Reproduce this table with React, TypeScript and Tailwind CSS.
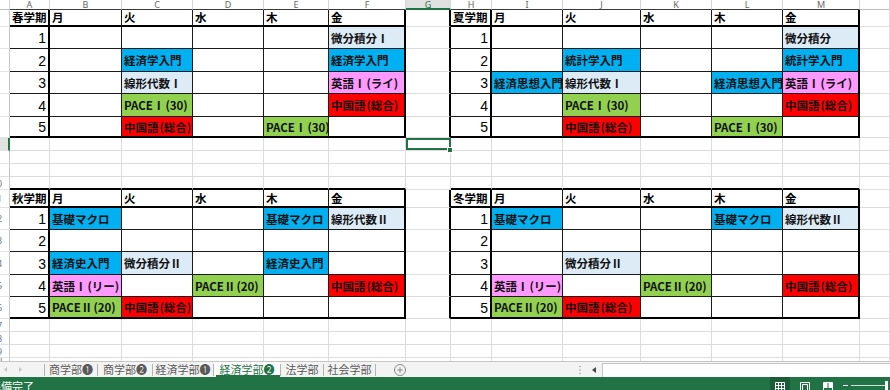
import React from 'react';

type Fill = 'B' | 'L' | 'G' | 'R' | 'P';
const FILL: Record<Fill, string> = {
  B: 'bg-[#00b0f0]',
  L: 'bg-[#ddebf7]',
  G: 'bg-[#92d050]',
  R: 'bg-[#ff0000]',
  P: 'bg-[#ff99ff]',
};

type Entry = [number, number, string, Fill];
interface Table {
  r0: number;
  c0: number;
  name: string;
  entries: Entry[];
}

const TABLES: Table[] = [
  {
    r0: 1,
    c0: 1,
    name: '春学期',
    entries: [
      [1, 5, '微分積分Ⅰ', 'L'],
      [2, 2, '経済学入門', 'B'],
      [2, 5, '経済学入門', 'B'],
      [3, 2, '線形代数Ⅰ', 'L'],
      [3, 5, '英語Ⅰ(ライ)', 'P'],
      [4, 2, 'PACEⅠ(30)', 'G'],
      [4, 5, '中国語(総合)', 'R'],
      [5, 2, '中国語(総合)', 'R'],
      [5, 4, 'PACEⅠ(30)', 'G'],
    ],
  },
  {
    r0: 1,
    c0: 8,
    name: '夏学期',
    entries: [
      [1, 5, '微分積分', 'L'],
      [2, 2, '統計学入門', 'B'],
      [2, 5, '統計学入門', 'B'],
      [3, 1, '経済思想入門', 'B'],
      [3, 2, '線形代数Ⅰ', 'L'],
      [3, 4, '経済思想入門', 'B'],
      [3, 5, '英語Ⅰ(ライ)', 'P'],
      [4, 2, 'PACEⅠ(30)', 'G'],
      [4, 5, '中国語(総合)', 'R'],
      [5, 2, '中国語(総合)', 'R'],
      [5, 4, 'PACEⅠ(30)', 'G'],
    ],
  },
  {
    r0: 11,
    c0: 1,
    name: '秋学期',
    entries: [
      [1, 1, '基礎マクロ', 'B'],
      [1, 4, '基礎マクロ', 'B'],
      [1, 5, '線形代数Ⅱ', 'L'],
      [3, 1, '経済史入門', 'B'],
      [3, 2, '微分積分Ⅱ', 'L'],
      [3, 4, '経済史入門', 'B'],
      [4, 1, '英語Ⅰ(リー)', 'P'],
      [4, 3, 'PACEⅡ(20)', 'G'],
      [4, 5, '中国語(総合)', 'R'],
      [5, 1, 'PACEⅡ(20)', 'G'],
      [5, 2, '中国語(総合)', 'R'],
    ],
  },
  {
    r0: 11,
    c0: 8,
    name: '冬学期',
    entries: [
      [1, 1, '基礎マクロ', 'B'],
      [1, 4, '基礎マクロ', 'B'],
      [1, 5, '線形代数Ⅱ', 'L'],
      [3, 2, '微分積分Ⅱ', 'L'],
      [4, 1, '英語Ⅰ(リー)', 'P'],
      [4, 3, 'PACEⅡ(20)', 'G'],
      [4, 5, '中国語(総合)', 'R'],
      [5, 1, 'PACEⅡ(20)', 'G'],
      [5, 2, '中国語(総合)', 'R'],
    ],
  },
];

const DAYS = ['月', '火', '水', '木', '金'];
const LETTERS = ['', 'A', 'B', 'C', 'D', 'E', 'F', 'G', 'H', 'I', 'J', 'K', 'L', 'M', ''];
const NROWS = 21;
const NCOLS = 15;

function tableAt(r: number, c: number): Table | undefined {
  return TABLES.find((t) => r >= t.r0 && r <= t.r0 + 5 && c >= t.c0 && c <= t.c0 + 5);
}

function rightClass(r: number, c: number): string {
  if (r === 0 || c === 0) return 'border-r border-r-[#d4d4d4]';
  const t = tableAt(r, c);
  if (t) {
    if (c === t.c0 || c === t.c0 + 5) return 'border-r-2 border-r-black';
    return 'border-r border-r-[#1a1a1a]';
  }
  const tn = tableAt(r, c + 1);
  if (tn && c + 1 === tn.c0) return 'border-r-2 border-r-black';
  return 'border-r border-r-[#dcdcdc]';
}

function bottomClass(r: number, c: number): string {
  if (r === NROWS - 1) return '';
  if (r === 0 && c === 7) return 'border-b-2 border-b-[#217346]';
  const t = tableAt(r, c);
  if (t) {
    if (r === t.r0 || r === t.r0 + 5) return 'border-b-2 border-b-black';
    return 'border-b border-b-[#1a1a1a]';
  }
  const tb = tableAt(r + 1, c);
  if (tb && r + 1 === tb.r0) return r === 0 ? 'border-b border-b-[#3a3a3a]' : 'border-b-2 border-b-black';
  if (r === 0) return 'border-b border-b-[#bdbdbd]';
  return 'border-b border-b-[#dcdcdc]';
}

function Txt({ s }: { s: string }) {
  const parts = Array.from(s);
  return (
    <>
      {parts.map((ch, i) => {
        if (ch === '(') return <span key={i} className="ml-[1px]">{ch}</span>;
        return <React.Fragment key={i}>{ch}</React.Fragment>;
      })}
    </>
  );
}

function Cell({ r, c }: { r: number; c: number }) {
  const base = `relative flex items-center whitespace-nowrap ${rightClass(r, c)} ${bottomClass(r, c)}`;

  if (r === 0) {
    const sel = c === 7;
    return (
      <div
        className={`${base} justify-center overflow-hidden font-['Noto_Sans',sans-serif] text-[9px] leading-none ${
          sel ? 'bg-[#e1e1e1] text-[#217346]' : 'bg-white text-[#666]'
        }`}
      >
        {LETTERS[c]}
      </div>
    );
  }

  if (c === 0) {
    const sel = r === 7;
    return (
      <div
        className={`relative flex items-center overflow-hidden font-['Noto_Sans',sans-serif] text-[9px] leading-none ${
          sel
            ? 'bg-[#e1e1e1] text-[#217346] border-r-2 border-r-[#217346]'
            : 'bg-white text-[#777] border-r border-r-[#c8c8c8]'
        } ${r === NROWS - 1 ? '' : 'border-b border-b-[#e2e2e2]'}`}
      >
        <span className="block w-[24px] shrink-0 -ml-[15px] text-center">{r}</span>
      </div>
    );
  }

  const t = tableAt(r, c);
  if (t) {
    if (r === t.r0) {
      return (
        <div className={`${base} overflow-hidden bg-white pl-[2px] pt-[1px] text-[11.5px] font-bold text-black`}>
          {c === t.c0 ? t.name : DAYS[c - t.c0 - 1]}
        </div>
      );
    }
    const p = r - t.r0;
    if (c === t.c0) {
      return (
        <div
          className={`${base} justify-end overflow-hidden bg-white pr-[2px] pt-[2px] font-['Liberation_Sans',sans-serif] text-[14px] text-black`}
        >
          {p}
        </div>
      );
    }
    const d = c - t.c0;
    const e = t.entries.find((x) => x[0] === p && x[1] === d);
    return (
      <div
        className={`${base} overflow-hidden ${e ? FILL[e[3]] : 'bg-white'} pl-[2px] pt-[2px] text-[11.5px] font-bold text-[#111]`}
      >
        {e ? <Txt s={e[2]} /> : ''}
      </div>
    );
  }

  if (r === 7 && c === 7) {
    return (
      <div className={`${base} z-10 bg-white`}>
        <div className="absolute left-0 top-0 -right-px bottom-0 border-2 border-[#217346]" />
        <div className="absolute -right-[3px] -bottom-[3px] h-[6px] w-[6px] border border-white bg-[#217346]" />
      </div>
    );
  }

  return <div className={`${base} bg-white`} />;
}

function Sep() {
  return <div className="h-[12px] w-px shrink-0 self-center bg-[#b4b4b4]" />;
}

function Tab({ label, w, active }: { label: string; w: string; active?: boolean }) {
  return (
    <div
      className={`relative flex shrink-0 items-center justify-center text-[11px] leading-none ${w} ${
        active ? 'bg-white text-[#217346]' : 'text-[#5a5a5a]'
      }`}
    >
      {label}
      {active && <div className="absolute bottom-0 left-[2px] right-0 h-[2px] bg-[#217346]" />}
    </div>
  );
}

export default function App() {
  const cells: React.ReactNode[] = [];
  for (let r = 0; r < NROWS; r++) {
    for (let c = 0; c < NCOLS; c++) {
      cells.push(<Cell key={`${r}-${c}`} r={r} c={c} />);
    }
  }

  return (
    <div className="flex h-[390px] w-[890px] flex-col overflow-hidden bg-white font-['Noto_Sans_CJK_JP',sans-serif]">
      <div className="grid grid-cols-[10px_40px_72px_71px_71px_65px_77px_45px_41px_71px_78px_71px_71px_77px_30px] grid-rows-[10px_17px_22px_23px_22px_23px_21px_13px_13px_13px_13px_18px_22px_22px_23px_22px_22px_13px_13px_13px_3px]">
        {cells}
      </div>

      {/* sheet tab bar */}
      <div className="flex h-[16px] shrink-0 border-t border-t-[#c6c6c6] bg-[#f3f3f3]">
        <div className="flex w-[44px] shrink-0 items-center">
          <svg width="44" height="15" viewBox="0 0 44 15">
            <path d="M7 5 L4 7.5 L7 10 Z" fill="#c4c4c4" />
            <path d="M19 5 L22 7.5 L19 10 Z" fill="#c4c4c4" />
          </svg>
        </div>
        <Sep />
        <Tab label="商学部❶" w="w-[52px]" />
        <Sep />
        <Tab label="商学部❷" w="w-[54px]" />
        <Sep />
        <Tab label="経済学部❶" w="w-[60px]" />
        <Sep />
        <Tab label="経済学部❷" w="w-[66px]" active />
        <Sep />
        <Tab label="法学部" w="w-[42px]" />
        <Sep />
        <Tab label="社会学部" w="w-[51px]" />
        <Sep />
        <div className="flex w-[48px] shrink-0 items-center justify-center">
          <svg width="14" height="14" viewBox="0 0 14 14">
            <circle cx="7" cy="7" r="5.5" fill="none" stroke="#8a8a8a" strokeWidth="1" />
            <path d="M7 4.2 V9.8 M4.2 7 H9.8" stroke="#8a8a8a" strokeWidth="1" />
          </svg>
        </div>
        <div className="flex-1" />
        <div className="flex w-[12px] shrink-0 items-center justify-center">
          <svg width="4" height="10" viewBox="0 0 4 10">
            <circle cx="2" cy="1.5" r="0.8" fill="#9a9a9a" />
            <circle cx="2" cy="5" r="0.8" fill="#9a9a9a" />
            <circle cx="2" cy="8.5" r="0.8" fill="#9a9a9a" />
          </svg>
        </div>
        <div className="flex w-[16px] shrink-0 items-center justify-center">
          <svg width="6" height="8" viewBox="0 0 6 8">
            <path d="M5 1 L1 4 L5 7 Z" fill="#444" />
          </svg>
        </div>
        <div className="mt-[1px] w-[288px] shrink-0 border-l border-t border-[#c6c6c6] bg-white" />
      </div>

      {/* status bar */}
      <div className="flex h-[13px] shrink-0 overflow-hidden bg-[#217346]">
        <div className="-ml-[10px] pt-[4px] text-[11px] leading-none text-white">準備完了</div>
        <div className="flex-1" />
        <div className="flex w-[20px] shrink-0 justify-center bg-[#1a5c37] pt-[5px]">
          <svg width="10" height="10" viewBox="0 0 10 10">
            <path d="M0.5 0.5 H9.5 V9.5 H0.5 Z M0.5 3.5 H9.5 M0.5 6.5 H9.5 M3.5 0.5 V9.5 M6.5 0.5 V9.5" fill="none" stroke="#ffffff" strokeWidth="1" />
          </svg>
        </div>
        <div className="w-[10px] shrink-0" />
        <div className="w-[10px] shrink-0 pt-[5px]">
          <svg width="10" height="10" viewBox="0 0 10 10">
            <path d="M0.5 0.5 H9.5 V9.5 H0.5 Z" fill="none" stroke="#ffffff" strokeWidth="1" />
            <path d="M2.5 2.5 H7.5 V9.5 H2.5 Z" fill="none" stroke="#ffffff" strokeWidth="1" />
          </svg>
        </div>
        <div className="w-[13px] shrink-0" />
        <div className="w-[10px] shrink-0 pt-[5px]">
          <svg width="10" height="10" viewBox="0 0 10 10">
            <path d="M0.5 0.5 H9.5 V9.5 H0.5 Z" fill="none" stroke="#ffffff" strokeWidth="1" />
            <path d="M1 1 H4.5 V6 H1 Z M5.5 1 H9 V6 H5.5 Z" fill="#ffffff" />
          </svg>
        </div>
        <div className="w-[10px] shrink-0" />
        <div className="mt-[8px] h-px w-[5px] shrink-0 bg-white" />
        <div className="w-[3px] shrink-0" />
        <div className="mt-[8px] h-px w-[34px] shrink-0 bg-[#cfe3d6]" />
        <div className="mt-[4px] h-[9px] w-[3px] shrink-0 bg-white" />
        <div className="w-[2px] shrink-0" />
      </div>
    </div>
  );
}
